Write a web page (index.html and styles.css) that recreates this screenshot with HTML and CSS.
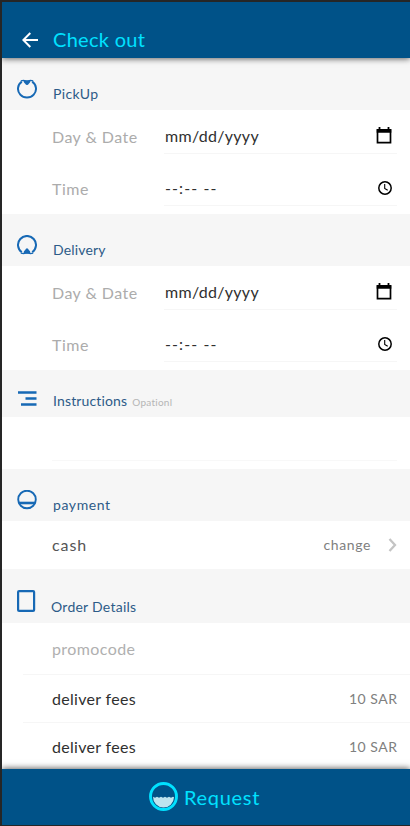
FILE: index.html
```html
<!DOCTYPE html>
<html lang="en">
<head>
<meta charset="utf-8">
<title>Check out</title>
<link rel="stylesheet" href="styles.css">
</head>
<body>
<div class="app">
  <header class="topbar">
    <svg class="back" width="16" height="16" viewBox="0 0 16 16"><path d="M16 8H1.500M8.300 1L1.300 8l7 7" fill="none" stroke="#fff" stroke-width="2"/></svg>
    <h1>Check out</h1>
  </header>
  <main>
    <section class="head">
      <svg width="20" height="20" viewBox="0 0 20 20"><path d="M4.800 2.600A9 8.800 0 1 0 15.200 2.600" fill="none" stroke="#1769b5" stroke-width="2"/><path d="M3.800 1.900L6.500 1.300L10 2.200L13.500 1.300L16.200 1.900" fill="none" stroke="#1769b5" stroke-width="1.300"/><path d="M6.800 1.600H13.200C13.600 3.200 12.800 4 12 4.400Q11 6 10 6Q9 6 8 4.400C7.200 4 6.400 3.200 6.800 1.600Z" fill="#1769b5"/></svg>
      <h2 class="t-pickup">PickUp</h2>
    </section>
    <section class="fields">
      <div class="field"><span class="label t-day">Day &amp; Date</span><div class="input"><span class="t-date">mm/dd/yyyy</span>
        <svg width="16" height="18" viewBox="0 0 16 18"><path d="M1.500 3h13v12.700h-13z" fill="none" stroke="#000" stroke-width="1.700"/><path d="M.7 2h14.600v3.800H.7zM2.600 0h1.800v3H2.600zM11.600 0h1.800v3h-1.800z"/></svg></div></div>
      <div class="field"><span class="label t-time">Time</span><div class="input"><span class="t-clock">--:-- --</span>
        <svg width="16" height="18" viewBox="0 0 16 18"><circle cx="9" cy="9" r="6.200" fill="none" stroke="#000" stroke-width="1.500"/><path d="M8.700 5v4.400l3 1.900" fill="none" stroke="#000" stroke-width="1.100"/></svg></div></div>
    </section>
    <section class="head">
      <svg width="20" height="20" viewBox="0 0 20 20"><path d="M4.800 17.300A9 9 0 1 1 15.200 17.300" fill="none" stroke="#1769b5" stroke-width="2"/><path d="M3.800 18.100L6.500 18.700L10 17.800L13.500 18.700L16.200 18.100" fill="none" stroke="#1769b5" stroke-width="1.300"/><path d="M6.800 18.600H13.200C13.700 16.700 12.800 15.600 12 15.200Q11 13.200 10 13.200Q9 13.200 8 15.200C7.200 15.600 6.300 16.700 6.800 18.600Z" fill="#1769b5"/></svg>
      <h2 class="t-delivery">Delivery</h2>
    </section>
    <section class="fields">
      <div class="field"><span class="label t-day">Day &amp; Date</span><div class="input"><span class="t-date">mm/dd/yyyy</span>
        <svg width="16" height="18" viewBox="0 0 16 18"><path d="M1.500 3h13v12.700h-13z" fill="none" stroke="#000" stroke-width="1.700"/><path d="M.7 2h14.600v3.800H.7zM2.600 0h1.800v3H2.600zM11.600 0h1.800v3h-1.800z"/></svg></div></div>
      <div class="field"><span class="label t-time">Time</span><div class="input"><span class="t-clock">--:-- --</span>
        <svg width="16" height="18" viewBox="0 0 16 18"><circle cx="9" cy="9" r="6.200" fill="none" stroke="#000" stroke-width="1.500"/><path d="M8.700 5v4.400l3 1.900" fill="none" stroke="#000" stroke-width="1.100"/></svg></div></div>
    </section>
    <section class="head head-short">
      <svg width="20" height="20" viewBox="0 0 20 20"><path d="M1 3.500h18.500M8.500 9.500h11M4 15.500h15.500" fill="none" stroke="#1769b5" stroke-width="2.400"/></svg>
      <h2 class="t-instr">Instructions</h2><small>Opationl</small>
    </section>
    <section class="notes"><div class="notes-line"></div></section>
    <section class="head">
      <svg width="20" height="20" viewBox="0 0 20 20"><circle cx="10" cy="9.500" r="8.800" fill="none" stroke="#1769b5" stroke-width="1.900"/><path d="M1.500 13h17" stroke="#1769b5" stroke-width="2.600"/></svg>
      <h2 class="t-payment">payment</h2>
    </section>
    <section class="pay">
      <span class="cash">cash</span><span class="change">change</span>
      <svg width="9" height="14" viewBox="0 0 9 14"><path d="M1.500 1l5.500 6-5.500 6" fill="none" stroke="#c4c4c4" stroke-width="2.300"/></svg>
    </section>
    <section class="head head-order">
      <svg width="20" height="22" viewBox="0 0 20 22"><rect x="1.100" y="1.100" width="16" height="19.800" rx="1" fill="none" stroke="#1769b5" stroke-width="2.200"/></svg>
      <h2 class="t-order">Order Details</h2>
    </section>
    <section class="details">
      <div class="item promo"><span class="t-promo">promocode</span></div>
      <div class="item"><span class="t-fees">deliver fees</span><span class="price">10 SAR</span></div>
      <div class="item item-last"><span class="t-fees">deliver fees</span><span class="price">10 SAR</span></div>
    </section>
  </main>
  <footer class="request">
    <svg width="30" height="30" viewBox="0 0 30 30"><circle cx="14.500" cy="14.500" r="13" fill="none" stroke="#00e1ff" stroke-width="2.900"/><path d="M4 14.800l2 1 2-1 2 1 2-1 2 1 2-1 2 1 2-1 2 1 2-1 1 .5A10.500 10.500 0 0 1 4 14.800Z" fill="#bde4ef"/></svg>
    <span>Request</span>
  </footer>
</div>
</body>
</html>
```
FILE: styles.css
```css
* { box-sizing: border-box; }
body { margin: 0; font-family: Lato, "Open Sans", sans-serif; font-weight: 400; font-variant-ligatures: none; background: #242424; }
svg { display: block; flex: none; }
span, small, h1, h2 { white-space: nowrap; }
.app { height: 826px; display: flex; flex-direction: column; border: solid #262626; border-width: 2px 0 1px 2px; background: #fff; overflow: hidden; }
.topbar { position: relative; z-index: 1; height: 56px; flex: none; display: flex; align-items: center; padding: 20px 0 0 20px; background: #005288; box-shadow: 0 1px 6px rgba(0,0,0,.6); }
.topbar h1 { margin: -2px 0 0 15px; font-size: 20px; line-height: 24px; font-weight: 400; color: #00e1ff; letter-spacing: .3px; }
main { flex: 1; min-height: 0; display: flex; flex-direction: column; }
.head { height: 52px; flex: none; display: flex; align-items: center; padding: 10px 13px 0 15px; background: #f6f6f6; }
.head h2 { margin: 0 0 0 16px; padding-top: 10px; font-size: 14px; line-height: 18px; font-weight: 400; color: #2d5b88; letter-spacing: .15px; }
.head small { margin: 7px 0 0 5px; font-size: 10px; line-height: 14px; color: #b5b5b5; letter-spacing: .25px; }
.head-short { height: 47px; }
.head-short h2 { padding-top: 5px; }
.head-order { height: 54px; }
.head-order h2 { margin-left: 14px; padding-top: 12px; letter-spacing: .25px; }
.head .t-pickup { letter-spacing: .35px; }
.head .t-payment { letter-spacing: .6px; }
.fields { height: 104px; flex: none; }
.field { height: 52px; display: grid; grid-template-columns: 112px 1fr; padding: 0 13px 0 50px; font-size: 16px; }
.label { padding-top: 17px; line-height: 20px; color: #acacac; }
.input { height: 44px; display: flex; align-items: center; justify-content: space-between; padding: 8px 5px 0 1px; border-bottom: 1px solid #f6f6f6; color: #303030; }
.notes { height: 52px; flex: none; padding: 43px 13px 0 50px; }
.notes-line { border-top: 1px solid #f8f8f8; }
.pay { height: 48px; flex: none; display: flex; align-items: center; padding: 0 13px 0 50px; font-size: 16px; color: #555; }
.cash { margin-top: -2px; letter-spacing: .9px; }
.change { margin: -2px 17px 0 auto; font-size: 14px; letter-spacing: .6px; color: #808080; }
.details { flex: 1; padding-left: 21px; }
.item { height: 48px; display: flex; align-items: center; justify-content: space-between; padding: 0 13px 0 29px; border-bottom: 1px solid #f6f6f6; font-size: 16px; color: #303030; }
.promo { height: 52px; color: #b0b0b0; }
.item-last { height: 47px; border-bottom: 0; }
.price { font-size: 14px; color: #808080; letter-spacing: .5px; margin-right: -.5px; }
.request { position: relative; z-index: 1; height: 56px; flex: none; display: flex; align-items: center; justify-content: center; gap: 5px; padding: 0 3px 1px 0; background: #005288; box-shadow: 0 -1px 6px rgba(0,0,0,.6); font-size: 20px; color: #00e1ff; letter-spacing: .7px; }
.t-day { letter-spacing: .45px; }
.t-time { letter-spacing: .5px; }
.t-date { letter-spacing: .3px; }
.t-clock { letter-spacing: 1.1px; }
.t-promo { letter-spacing: .4px; }
.t-fees { letter-spacing: .3px; }
```
